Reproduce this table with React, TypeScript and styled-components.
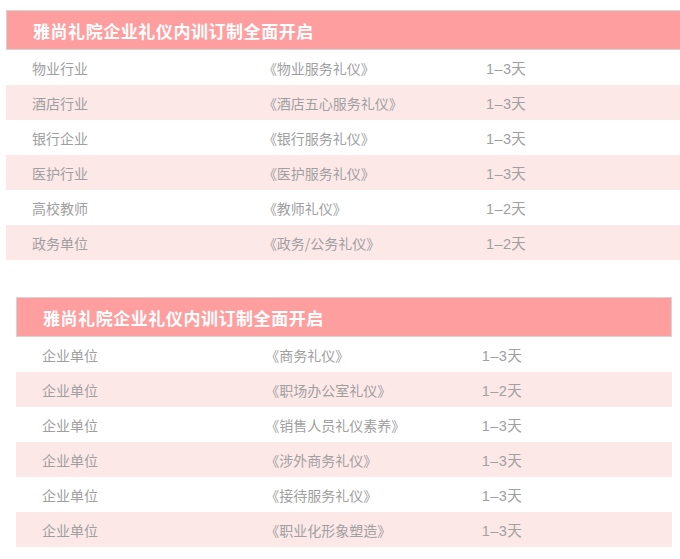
import React from "react"
import styled, { createGlobalStyle } from "styled-components"

interface Course {
	industry: string
	course: string
	days: string
}

const firstPlan: Course[] = [
	{ industry: "物业行业", course: "《物业服务礼仪》", days: "1–3天" },
	{ industry: "酒店行业", course: "《酒店五心服务礼仪》", days: "1–3天" },
	{ industry: "银行企业", course: "《银行服务礼仪》", days: "1–3天" },
	{ industry: "医护行业", course: "《医护服务礼仪》", days: "1–3天" },
	{ industry: "高校教师", course: "《教师礼仪》", days: "1–2天" },
	{ industry: "政务单位", course: "《政务/公务礼仪》", days: "1–2天" },
]

const secondPlan: Course[] = [
	{ industry: "企业单位", course: "《商务礼仪》", days: "1–3天" },
	{ industry: "企业单位", course: "《职场办公室礼仪》", days: "1–2天" },
	{ industry: "企业单位", course: "《销售人员礼仪素养》", days: "1–3天" },
	{ industry: "企业单位", course: "《涉外商务礼仪》", days: "1–3天" },
	{ industry: "企业单位", course: "《接待服务礼仪》", days: "1–3天" },
	{ industry: "企业单位", course: "《职业化形象塑造》", days: "1–3天" },
]

const GlobalStyle = createGlobalStyle`
	html, body {
		margin: 0;
		padding: 0;
		background: #ffffff;
		overflow: hidden;
	}
	body {
		font-family: "Noto Sans CJK SC", "Noto Sans", sans-serif;
	}
`

const Page = styled.div`
	display: flex;
	flex-direction: column;
	gap: 37px;
	padding-top: 10px;
	width: 680px;
`

const Table = styled.section<{ $inset: number; $width: number }>`
	margin-left: ${(props) => props.$inset}px;
	width: ${(props) => props.$width}px;
	flex-shrink: 0;
`

const Header = styled.div`
	height: 38px;
	display: flex;
	align-items: center;
	padding-left: 26px;
	background-color: #ff9e9e;
	border: 1px solid #d4d4d4;
	color: #ffffff;
	font-size: 17px;
	font-weight: 700;
	letter-spacing: 0.55px;
`

const Row = styled.div<{ $striped: boolean }>`
	display: grid;
	grid-template-columns: 38% 33% 1fr;
	align-items: center;
	height: 35px;
	background-color: ${(props) => (props.$striped ? "#fde8e8" : "#ffffff")};
	color: #a0a0a0;
	font-size: 14px;
`

const Cell = styled.span<{ $first?: boolean }>`
	padding-left: ${(props) => (props.$first ? "26px" : "0")};
	white-space: nowrap;
`

const Days = styled.span`
	font-family: "Liberation Sans", "Noto Sans CJK SC", sans-serif;
	font-size: 14.5px;
	letter-spacing: 0.4px;
	white-space: nowrap;
`

function PlanTable({ items, inset, width }: { items: Course[]; inset: number; width: number }) {
	return (
		<Table $inset={inset} $width={width}>
			<Header>雅尚礼院企业礼仪内训订制全面开启</Header>
			{items.map((item, index) => (
				<Row key={index} $striped={index % 2 === 1}>
					<Cell $first>{item.industry}</Cell>
					<Cell>{item.course}</Cell>
					<Days>{item.days}</Days>
				</Row>
			))}
		</Table>
	)
}

export default function App() {
	return (
		<>
			<GlobalStyle />
			<Page>
				<PlanTable items={firstPlan} inset={6} width={676} />
				<PlanTable items={secondPlan} inset={16} width={656} />
			</Page>
		</>
	)
}
